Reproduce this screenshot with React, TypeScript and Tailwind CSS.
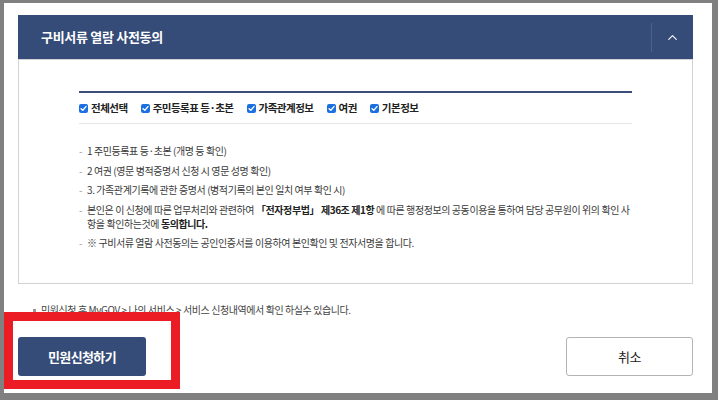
import { ChevronUp } from "lucide-react";

const items = [
  { key: "all", label: "전체선택" },
  { key: "resident", label: "주민등록표 등·초본" },
  { key: "family", label: "가족관계정보" },
  { key: "passport", label: "여권" },
  { key: "basic", label: "기본정보" },
];

function CheckMark() {
  return (
    <span className="flex h-[9px] w-[9px] items-center justify-center rounded-[2px] bg-[#1b6fe0]">
      <svg width="7" height="7" viewBox="0 0 8 8" fill="none">
        <path d="M1.2 4.2 L3.2 6.1 L6.8 1.8" stroke="white" strokeWidth="1.6" strokeLinecap="round" strokeLinejoin="round" />
      </svg>
    </span>
  );
}

function Dash() {
  return <span className="mr-[3px] inline-block w-[5px] shrink-0 text-[#999]">-</span>;
}

function App() {
  return (
    <div
      className="h-[400px] w-[718px] bg-[#808080] pb-[7px] pl-[4px] pr-[6px] pt-[3px]"
      style={{ fontFamily: '"Noto Sans CJK KR", "Noto Sans", sans-serif' }}
    >
      <div className="relative flex h-full flex-col bg-white pl-[14px] pr-[19px] pt-[12px]">
        {/* header */}
        <div className="flex h-[44px] items-center bg-[#354c78] pl-[23px]">
          <h2 className="flex-1 text-[13px] font-bold tracking-[-0.3px] text-white">구비서류 열람 사전동의</h2>
          <div className="h-[29px] w-px bg-[#4b6190]" />
          <div className="flex w-[41px] items-center justify-center">
            <ChevronUp size={15} color="white" strokeWidth={1.8} />
          </div>
        </div>

        {/* content */}
        <div className="h-[225px] border border-[#d3d3d3] px-[60px] pt-[31px]">
          <div className="border-t-2 border-[#3b4f7a]" />
          <div className="flex h-[31px] items-center gap-[13px] border-b border-[#e6e6e6] text-[10.5px] font-bold tracking-[-0.5px] text-[#222]">
            {items.map((it) => (
              <label key={it.key} className="flex items-center gap-[3px]">
                <CheckMark />
                <span>{it.label}</span>
              </label>
            ))}
          </div>

          <ul className="mt-[20px] flex flex-col gap-[5.5px] text-[10px] leading-[14px] tracking-[-0.42px] text-[#3a3a3a]">
            <li className="flex">
              <Dash />
              <span>1 주민등록표 등·초본 (개명 등 확인)</span>
            </li>
            <li className="flex">
              <Dash />
              <span>2 여권 (영문 병적증명서 신청 시 영문 성명 확인)</span>
            </li>
            <li className="flex">
              <Dash />
              <span>3. 가족관계기록에 관한 증명서 (병적기록의 본인 일치 여부 확인 시)</span>
            </li>
            <li className="flex">
              <Dash />
              <span className="whitespace-nowrap">
                본인은 이 신청에 따른 업무처리와 관련하여{" "}
                <b className="text-[#222]">「전자정부법」 제36조 제1항</b> 에 따른 행정정보의 공동이용을 통하여 담당 공무원이 위의 확인 사
                <br />
                항을 확인하는것에 <b className="text-[#222]">동의합니다.</b>
              </span>
            </li>
            <li className="flex">
              <Dash />
              <span>※ 구비서류 열람 사전동의는 공인인증서를 이용하여 본인확인 및 전자서명을 합니다.</span>
            </li>
          </ul>
        </div>

        {/* note */}
        <p className="mt-[20px] flex items-center pl-[15px] text-[10px] leading-[12px] tracking-[-0.42px] text-[#444]">
          <span className="mr-[5px] inline-block h-[3px] w-[3px] bg-[#999]" />
          민원신청 후 MyGOV &gt; 나의 서비스 &gt; 서비스 신청내역에서 확인 하실수 있습니다.
        </p>

        {/* buttons */}
        <div className="mt-[21px] flex items-center justify-between">
          <button className="h-[39px] w-[128px] rounded-[3px] bg-[#354c78] text-[13px] font-bold tracking-[-0.6px] text-white">
            민원신청하기
          </button>
          <button className="h-[39px] w-[127px] rounded-[3px] border border-[#b3b3b3] bg-white text-[13px] tracking-[-0.5px] text-[#222]">
            취소
          </button>
        </div>

        {/* red highlight annotation */}
        <div className="pointer-events-none absolute left-0 top-[309px] h-[77px] w-[176px] border-[9px] border-[#ec1c24]" />
      </div>
    </div>
  );
}

export default App;
